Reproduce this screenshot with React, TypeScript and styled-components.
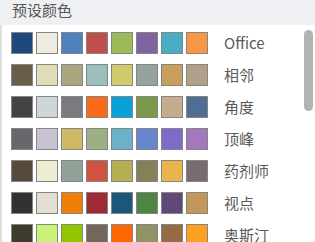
import React from 'react'
import styled, { createGlobalStyle } from 'styled-components'

const GlobalStyle = createGlobalStyle`
  html, body {
    margin: 0;
    padding: 0;
    background: #ffffff;
  }
  body {
    font-family: "Noto Sans CJK SC", "Noto Sans", sans-serif;
  }
`

const Panel = styled.div`
  width: 315px;
  height: 242px;
  display: flex;
  flex-direction: column;
  overflow: hidden;
  background: #fff;
`

const Header = styled.div`
  height: 25px;
  flex-shrink: 0;
  background: #eff0f3;
  padding-left: 12px;
  font-size: 15px;
  line-height: 20px;
  color: #555555;
`

const Body = styled.div`
  flex: 1;
  display: flex;
  border-left: 2px solid #dedede;
  overflow: hidden;
`

const List = styled.div`
  flex: 1;
  display: flex;
  flex-direction: column;
  gap: 10px;
  padding: 7px 0 0 9px;
`

const Row = styled.div`
  display: flex;
  align-items: center;
  height: 22px;
  flex-shrink: 0;
`

const Swatches = styled.div`
  display: flex;
  gap: 3px;
`

const Swatch = styled.div<{ $color: string }>`
  width: 22px;
  height: 22px;
  box-sizing: border-box;
  border: 1px solid #858585;
  background: ${p => p.$color};
`

const Label = styled.span`
  margin-left: 16px;
  font-size: 15px;
  line-height: 22px;
  color: #5a5a5a;
  white-space: nowrap;
`

const Track = styled.div`
  width: 9px;
  margin-right: 2px;
  padding-top: 5px;
  flex-shrink: 0;
`

const Thumb = styled.div`
  height: 81px;
  border-radius: 5px;
  background: #b3b3b3;
`

const themes = [
  { name: 'Office', colors: ['#1F497D', '#EEECE1', '#4F81BD', '#C0504D', '#9BBB59', '#8064A2', '#4BACC6', '#F79646'] },
  { name: '相邻', colors: ['#695E4A', '#DFDCB7', '#A9A57C', '#9CBEBD', '#D2CB6C', '#95A39D', '#C89F5D', '#B1A089'] },
  { name: '角度', colors: ['#434342', '#CDD7D9', '#797B7E', '#F96A1B', '#08A1D9', '#7C984A', '#C2AD8D', '#506E94'] },
  { name: '顶峰', colors: ['#69676D', '#C9C2D1', '#CEB966', '#9CB084', '#6BB1C9', '#6585CF', '#7E6BC9', '#A379BB'] },
  { name: '药剂师', colors: ['#564B3C', '#ECEDD1', '#93A299', '#CF543F', '#B5AE53', '#848058', '#E8B54D', '#786C71'] },
  { name: '视点', colors: ['#323232', '#E3DED1', '#F07F09', '#9F2936', '#1B587C', '#4E8542', '#604878', '#C19859'] },
  { name: '奥斯汀', colors: ['#3E3D2D', '#CAF278', '#94C600', '#71685A', '#FF6700', '#909465', '#956B43', '#FEA022'] },
]

const App = () => {
  return (
    <>
      <GlobalStyle />
      <Panel>
        <Header>预设颜色</Header>
        <Body>
          <List>
            {themes.map(theme => (
              <Row key={theme.name}>
                <Swatches>
                  {theme.colors.map((c, i) => <Swatch key={i} $color={c} />)}
                </Swatches>
                <Label>{theme.name}</Label>
              </Row>
            ))}
          </List>
          <Track>
            <Thumb />
          </Track>
        </Body>
      </Panel>
    </>
  )
}

export default App
